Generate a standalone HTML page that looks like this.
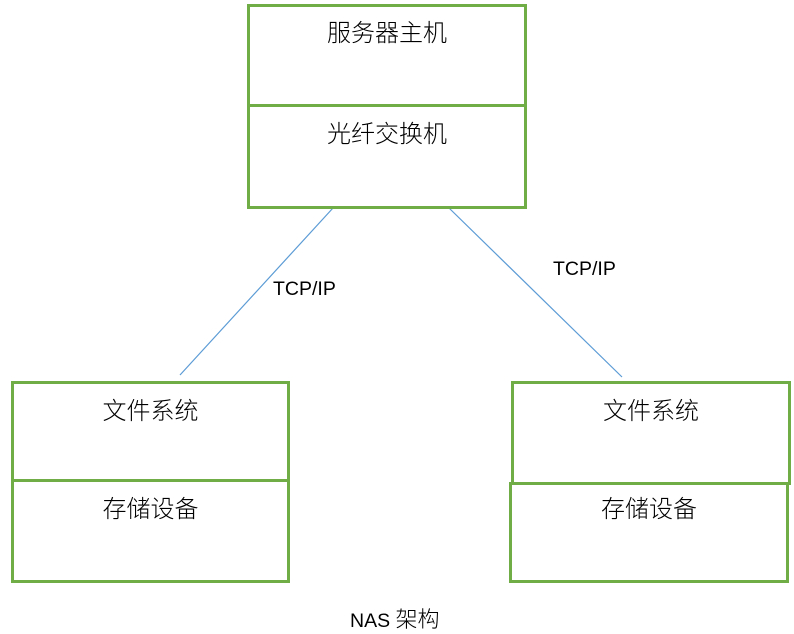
<!DOCTYPE html>
<html><head><meta charset="utf-8"><style>
body{margin:0;width:794px;height:633px;background:#fff;position:relative;overflow:hidden;font-family:"Liberation Sans","Noto Sans CJK SC",sans-serif;color:#000}
.b{position:absolute;border:3px solid #70AD47;box-sizing:border-box}
.t{position:absolute;font-size:24px;text-align:center;line-height:1;font-family:"Noto Sans CJK SC","WenQuanYi Zen Hei",sans-serif;font-weight:300}
.l{position:absolute;font-size:19.5px;line-height:1}
</style></head><body>
<svg width="794" height="633" style="position:absolute;left:0;top:0">
<line x1="333" y1="208" x2="180" y2="375" stroke="#5B9BD5" stroke-width="1.2"/>
<line x1="449" y1="208" x2="622" y2="377" stroke="#5B9BD5" stroke-width="1.2"/>
</svg>
<div class="b" style="left:247px;top:4px;width:280px;height:103px"></div>
<div class="b" style="left:247px;top:104px;width:280px;height:105px"></div>
<div class="b" style="left:11px;top:381px;width:279px;height:101px"></div>
<div class="b" style="left:11px;top:479px;width:279px;height:104px"></div>
<div class="b" style="left:511px;top:381px;width:280px;height:104px"></div>
<div class="b" style="left:509px;top:482px;width:280px;height:101px"></div>
<div class="t" style="left:247px;width:280px;top:19px">服务器主机</div>
<div class="t" style="left:247px;width:280px;top:120px">光纤交换机</div>
<div class="t" style="left:11px;width:279px;top:397px">文件系统</div>
<div class="t" style="left:11px;width:279px;top:495px">存储设备</div>
<div class="t" style="left:511px;width:280px;top:397px">文件系统</div>
<div class="t" style="left:509px;width:280px;top:495px">存储设备</div>
<div class="l" style="left:273px;top:280px">TCP/IP</div>
<div class="l" style="left:553px;top:260px">TCP/IP</div>
<div class="l" style="left:350px;top:607px">NAS <span style="font-family:'Noto Sans CJK SC',sans-serif;font-weight:300;font-size:22px">架构</span></div>
</body></html>
